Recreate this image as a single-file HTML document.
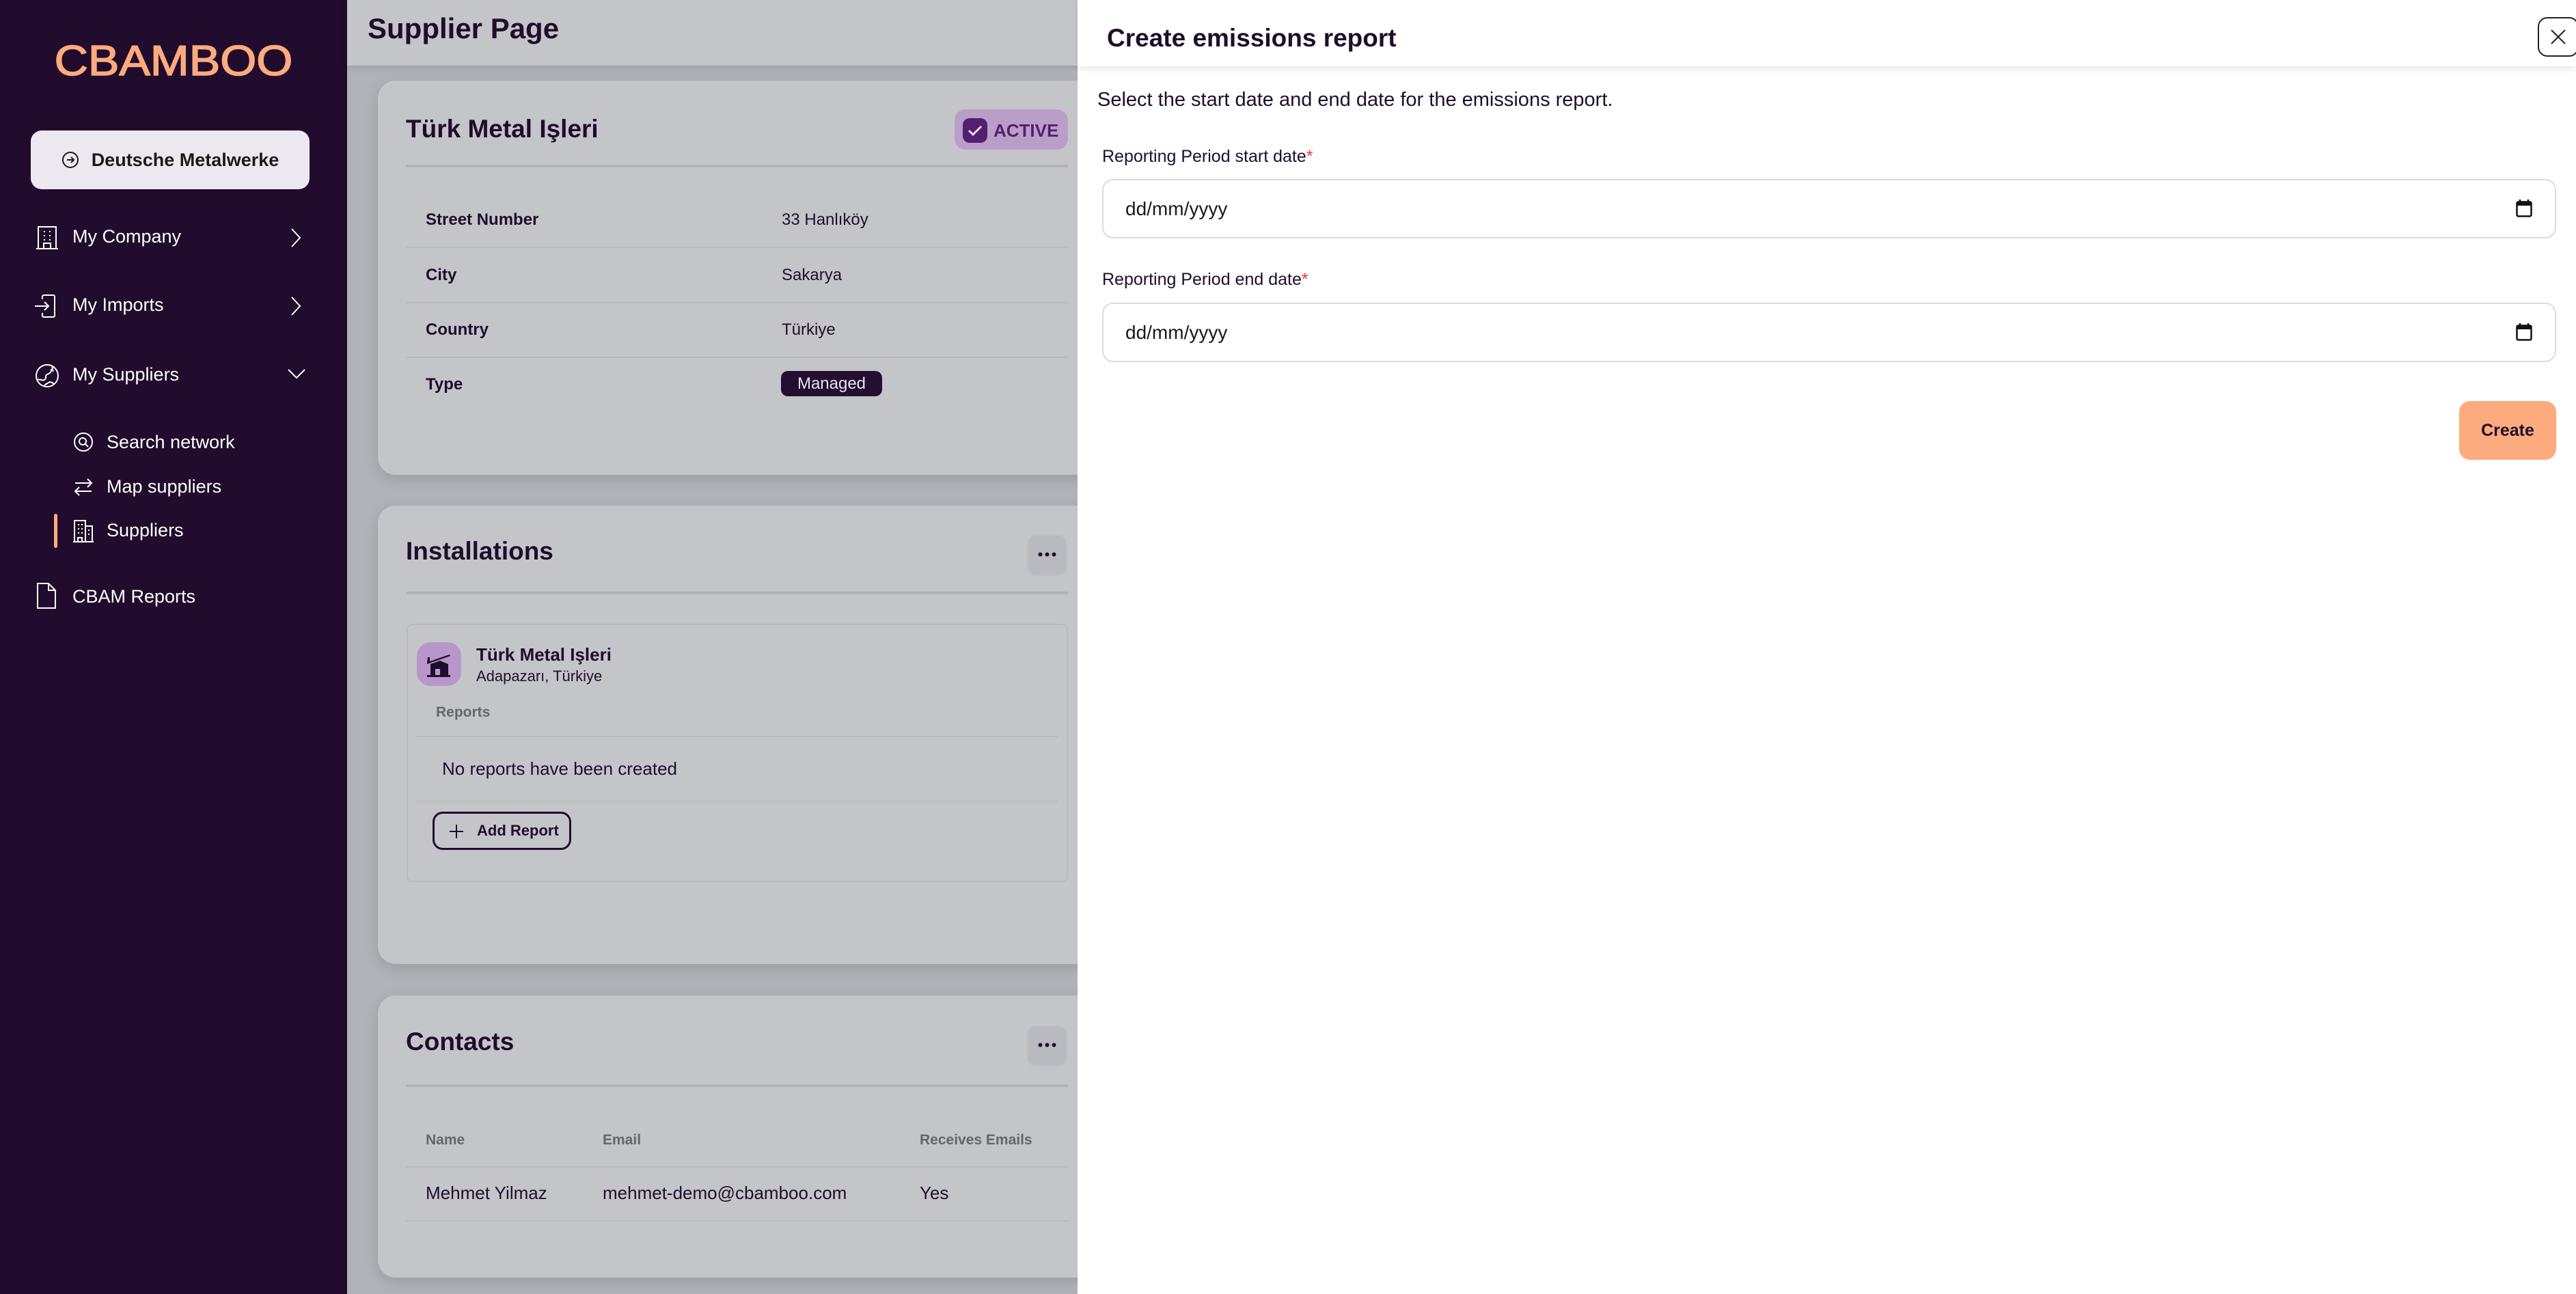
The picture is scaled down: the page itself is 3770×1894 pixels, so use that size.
<!DOCTYPE html>
<html><head><meta charset="utf-8"><style>
*{box-sizing:border-box;margin:0;padding:0}
body{width:3770px;height:1894px;overflow:hidden;position:relative;background:#b1b2b7;font-family:"Liberation Sans",sans-serif;color:#1f0e2b}
.a{position:absolute}
#sb{left:0;top:0;width:508px;height:1894px;background:#220c2d}
.logo{left:0;width:508px;top:54px;text-align:center;color:#fcab7e;font-size:62px;letter-spacing:0px;transform:scaleX(1.1);transform-origin:center;-webkit-text-stroke:1.5px #fcab7e}
.cbtn{left:45px;top:191px;width:408px;height:86px;background:#ebe9ef;border-radius:16px;font-weight:bold;font-size:27px;color:#1a1a1a;display:flex;align-items:center;justify-content:center;gap:18px}
.nav{color:#fff;font-size:27px}
.card{background:#c4c5c9;border-radius:26px;box-shadow:0 6px 20px rgba(0,0,0,.12)}
.h2{font-size:37px;font-weight:bold}
.lbl{font-size:24px;font-weight:bold}
.val{font-size:24px}
.hr{height:4px;background:#b2b3b8}
.thin{height:2px;background:#b9babe}
.dots{width:55px;height:55px;border-radius:10px;background:#b9babf;box-shadow:0 2px 4px rgba(0,0,0,.08)}
.dots svg{position:absolute;left:14px;top:24px}
#panel{left:1577px;top:0;width:2193px;height:1894px;background:#fff}
.inp{left:36px;width:2128px;height:87px;border:2px solid #dcdcdc;border-radius:16px;font-size:28px;padding-left:32px;line-height:83px;color:#1a1a1a}
</style></head><body>
<div id="sb" class="a">
 <div class="a logo">CBAMBOO</div>
 <div class="a cbtn"><svg width="26" height="26" viewBox="0 0 26 26" fill="none" stroke="#1a1a1a" stroke-width="2"><circle cx="13" cy="13" r="11"/><path d="M8 13h10M14 9l4 4-4 4"/></svg>Deutsche Metalwerke</div>
 <svg class="a" style="left:52px;top:330px" width="34" height="36" viewBox="0 0 34 36" fill="none" stroke="#fff" stroke-width="2"><path d="M4 2h26v32H4zM1 34h32M12 34v-8h10v8"/><path d="M12 9h2M20 9h2M12 15h2M20 15h2M12 21h2M20 21h2"/></svg>
 <div class="a nav" style="left:106px;top:331px">My Company</div>
 <svg class="a" style="left:424px;top:333px" width="18" height="30" viewBox="0 0 18 30" fill="none" stroke="#fff" stroke-width="2"><path d="M3 2l12 13L3 28"/></svg>
 <svg class="a" style="left:50px;top:430px" width="36" height="36" viewBox="0 0 36 36" fill="none" stroke="#fff" stroke-width="2"><path d="M12 8V4a2 2 0 012-2h14a2 2 0 012 2v28a2 2 0 01-2 2H14a2 2 0 01-2-2v-4M1 18h20M15 12l6 6-6 6"/></svg>
 <div class="a nav" style="left:106px;top:431px">My Imports</div>
 <svg class="a" style="left:424px;top:433px" width="18" height="30" viewBox="0 0 18 30" fill="none" stroke="#fff" stroke-width="2"><path d="M3 2l12 13L3 28"/></svg>
 <svg class="a" style="left:51px;top:532px" width="36" height="36" viewBox="0 0 36 36" fill="none" stroke="#fff" stroke-width="2"><circle cx="18" cy="18" r="16"/><path d="M4 24c4-2 6 2 10 0s0-6 4-8 6-2 6-8M14 34c0-4 4-4 6-6s6 0 8 2M26 4c-2 4 2 6 0 8"/></svg>
 <div class="a nav" style="left:106px;top:533px">My Suppliers</div>
 <svg class="a" style="left:420px;top:538px" width="28" height="18" viewBox="0 0 28 18" fill="none" stroke="#fff" stroke-width="2"><path d="M2 3l12 12L26 3"/></svg>
 <svg class="a" style="left:107px;top:632px" width="30" height="30" viewBox="0 0 30 30" fill="none" stroke="#fff" stroke-width="2"><circle cx="15" cy="15" r="13"/><circle cx="14" cy="14" r="5"/><path d="M18 18l4 4"/></svg>
 <div class="a nav" style="left:156px;top:632px">Search network</div>
 <svg class="a" style="left:106px;top:697px" width="32" height="32" viewBox="0 0 32 32" fill="none" stroke="#fff" stroke-width="2"><path d="M4 10h24M22 4l6 6-6 6M28 22H4M10 16l-6 6 6 6"/></svg>
 <div class="a nav" style="left:156px;top:697px">Map suppliers</div>
 <div class="a" style="left:79px;top:752px;width:5px;height:50px;background:#fcab7e;border-radius:3px"></div>
 <svg class="a" style="left:106px;top:760px" width="32" height="34" viewBox="0 0 32 34" fill="none" stroke="#fff" stroke-width="2"><path d="M3 33V2h16v31M19 10h10v23M1 33h30M8 8h2M13 8h2M8 14h2M13 14h2M8 20h2M13 20h2M23 16h2M23 22h2M8 33v-6h6v6"/></svg>
 <div class="a nav" style="left:156px;top:761px">Suppliers</div>
 <svg class="a" style="left:52px;top:852px" width="32" height="40" viewBox="0 0 32 40" fill="none" stroke="#fff" stroke-width="2"><path d="M3 2h16l10 10v26H3zM19 2v10h10"/></svg>
 <div class="a nav" style="left:106px;top:858px">CBAM Reports</div>
</div>

<div class="a" style="left:508px;top:0;width:1100px;height:96px;background:#c4c5c9;box-shadow:0 4px 10px rgba(0,0,0,.1)"></div>
<div class="a" style="left:538px;top:18px;font-size:42px;font-weight:bold">Supplier Page</div>

<div class="a card" style="left:553px;top:118px;width:1100px;height:577px"></div>
<div class="a h2" style="left:594px;top:168px">Türk Metal Işleri</div>
<div class="a" style="left:1397px;top:160px;width:166px;height:59px;background:#b99fc8;border-radius:16px"></div>
<svg class="a" style="left:1409px;top:173px" width="36" height="36" viewBox="0 0 36 36"><rect x="0" y="0" width="36" height="36" rx="10" fill="#52206f"/><path d="M9 18l6 6 12-12" fill="none" stroke="#e6dcee" stroke-width="3"/></svg>
<div class="a" style="left:1454px;top:176px;font-size:26px;font-weight:bold;color:#52206f">ACTIVE</div>
<div class="a hr" style="left:594px;top:241px;width:969px"></div>
<div class="a lbl" style="left:623px;top:308px">Street Number</div><div class="a val" style="left:1144px;top:308px">33 Hanlıköy</div>
<div class="a thin" style="left:594px;top:361px;width:969px"></div>
<div class="a lbl" style="left:623px;top:389px">City</div><div class="a val" style="left:1144px;top:389px">Sakarya</div>
<div class="a thin" style="left:594px;top:442px;width:969px"></div>
<div class="a lbl" style="left:623px;top:469px">Country</div><div class="a val" style="left:1144px;top:469px">Türkiye</div>
<div class="a thin" style="left:594px;top:522px;width:969px"></div>
<div class="a lbl" style="left:623px;top:549px">Type</div>
<div class="a" style="left:1143px;top:543px;width:148px;height:37px;background:#231030;border-radius:10px;color:#e7e4ea;font-size:24px;text-align:center;line-height:37px">Managed</div>

<div class="a card" style="left:553px;top:740px;width:1100px;height:671px"></div>
<div class="a h2" style="left:594px;top:786px">Installations</div>
<div class="a dots" style="left:1505px;top:784px"><svg width="27" height="7" viewBox="0 0 27 7" fill="#1f0e2b"><circle cx="3.5" cy="3.5" r="3"/><circle cx="13.5" cy="3.5" r="3"/><circle cx="23.5" cy="3.5" r="3"/></svg></div>
<div class="a hr" style="left:594px;top:866px;width:969px"></div>
<div class="a" style="left:595px;top:913px;width:968px;height:378px;border:2px solid #b9babe;border-radius:8px"></div>
<div class="a" style="left:610px;top:940px;width:65px;height:64px;background:#b797c9;border-radius:20px"></div>
<svg class="a" style="left:622px;top:952px" width="40" height="40" viewBox="0 0 40 40" fill="#1f0e2b"><path d="M4 10h3v6L36 6l1 2L3 20zM8 20l14-5 12 5v16H8zM3 36h34v3H3z"/><rect x="15" y="27" width="7" height="9" fill="#b797c9"/></svg>
<div class="a" style="left:697px;top:943px;font-size:26px;font-weight:bold">Türk Metal Işleri</div>
<div class="a" style="left:697px;top:977px;font-size:22px">Adapazarı, Türkiye</div>
<div class="a" style="left:638px;top:1031px;font-size:21px;font-weight:bold;color:#666">Reports</div>
<div class="a thin" style="left:610px;top:1077px;width:938px"></div>
<div class="a" style="left:647px;top:1110px;font-size:26px">No reports have been created</div>
<div class="a thin" style="left:610px;top:1172px;width:938px"></div>
<div class="a" style="left:633px;top:1188px;width:203px;height:56px;border:3px solid #1f0e2b;border-radius:15px;font-size:22px;font-weight:bold;line-height:50px;padding-left:62px">Add Report</div>
<svg class="a" style="left:656px;top:1205px" width="24" height="24" viewBox="0 0 24 24" stroke="#1f0e2b" stroke-width="2"><path d="M12 2v20M2 12h20"/></svg>

<div class="a card" style="left:553px;top:1457px;width:1100px;height:413px"></div>
<div class="a h2" style="left:594px;top:1504px">Contacts</div>
<div class="a dots" style="left:1505px;top:1502px"><svg width="27" height="7" viewBox="0 0 27 7" fill="#1f0e2b"><circle cx="3.5" cy="3.5" r="3"/><circle cx="13.5" cy="3.5" r="3"/><circle cx="23.5" cy="3.5" r="3"/></svg></div>
<div class="a hr" style="left:594px;top:1587px;width:969px"></div>
<div class="a" style="left:623px;top:1657px;font-size:21px;font-weight:bold;color:#666">Name</div>
<div class="a" style="left:882px;top:1657px;font-size:21px;font-weight:bold;color:#666">Email</div>
<div class="a" style="left:1346px;top:1657px;font-size:21px;font-weight:bold;color:#666">Receives Emails</div>
<div class="a thin" style="left:594px;top:1707px;width:969px"></div>
<div class="a val" style="left:623px;top:1731px;font-size:26px">Mehmet Yilmaz</div>
<div class="a val" style="left:882px;top:1731px;font-size:26px">mehmet-demo@cbamboo.com</div>
<div class="a val" style="left:1346px;top:1731px;font-size:26px">Yes</div>
<div class="a thin" style="left:594px;top:1786px;width:969px"></div>

<div id="panel" class="a">
 <div class="a" style="left:0;top:0;width:2193px;height:97px;background:#fff;box-shadow:0 5px 10px rgba(0,0,0,.08)"></div>
 <div class="a" style="left:43px;top:35px;font-size:37px;font-weight:bold">Create emissions report</div>
 <div class="a" style="left:2137px;top:25px;width:60px;height:58px;border:2px solid #222;border-radius:14px"></div>
 <svg class="a" style="left:2155px;top:42px" width="24" height="24" viewBox="0 0 24 24" stroke="#222" stroke-width="2"><path d="M2 2l20 20M22 2L2 22"/></svg>
 <div class="a" style="left:29px;top:130px;font-size:29px">Select the start date and end date for the emissions report.</div>
 <div class="a" style="left:36px;top:215px;font-size:25px">Reporting Period start date<span style="color:#e33">*</span></div>
 <div class="a inp" style="top:262px">dd/mm/yyyy</div>
 <div class="a" style="left:36px;top:395px;font-size:25px">Reporting Period end date<span style="color:#e33">*</span></div>
 <div class="a inp" style="top:443px">dd/mm/yyyy</div>
 <svg class="a" style="left:2105px;top:292px" width="24" height="26" viewBox="0 0 24 26"><rect x="1.5" y="3.5" width="21" height="21" rx="2" fill="none" stroke="#111" stroke-width="2.5"/><rect x="1" y="3" width="22" height="6" fill="#111"/><path d="M6 0v4M18 0v4" stroke="#111" stroke-width="2.5"/></svg>
 <svg class="a" style="left:2105px;top:473px" width="24" height="26" viewBox="0 0 24 26"><rect x="1.5" y="3.5" width="21" height="21" rx="2" fill="none" stroke="#111" stroke-width="2.5"/><rect x="1" y="3" width="22" height="6" fill="#111"/><path d="M6 0v4M18 0v4" stroke="#111" stroke-width="2.5"/></svg>
 <div class="a" style="left:2022px;top:587px;width:142px;height:86px;background:#fcab7e;border-radius:16px;font-size:25px;font-weight:bold;text-align:center;line-height:86px">Create</div>
</div>
</body></html>
